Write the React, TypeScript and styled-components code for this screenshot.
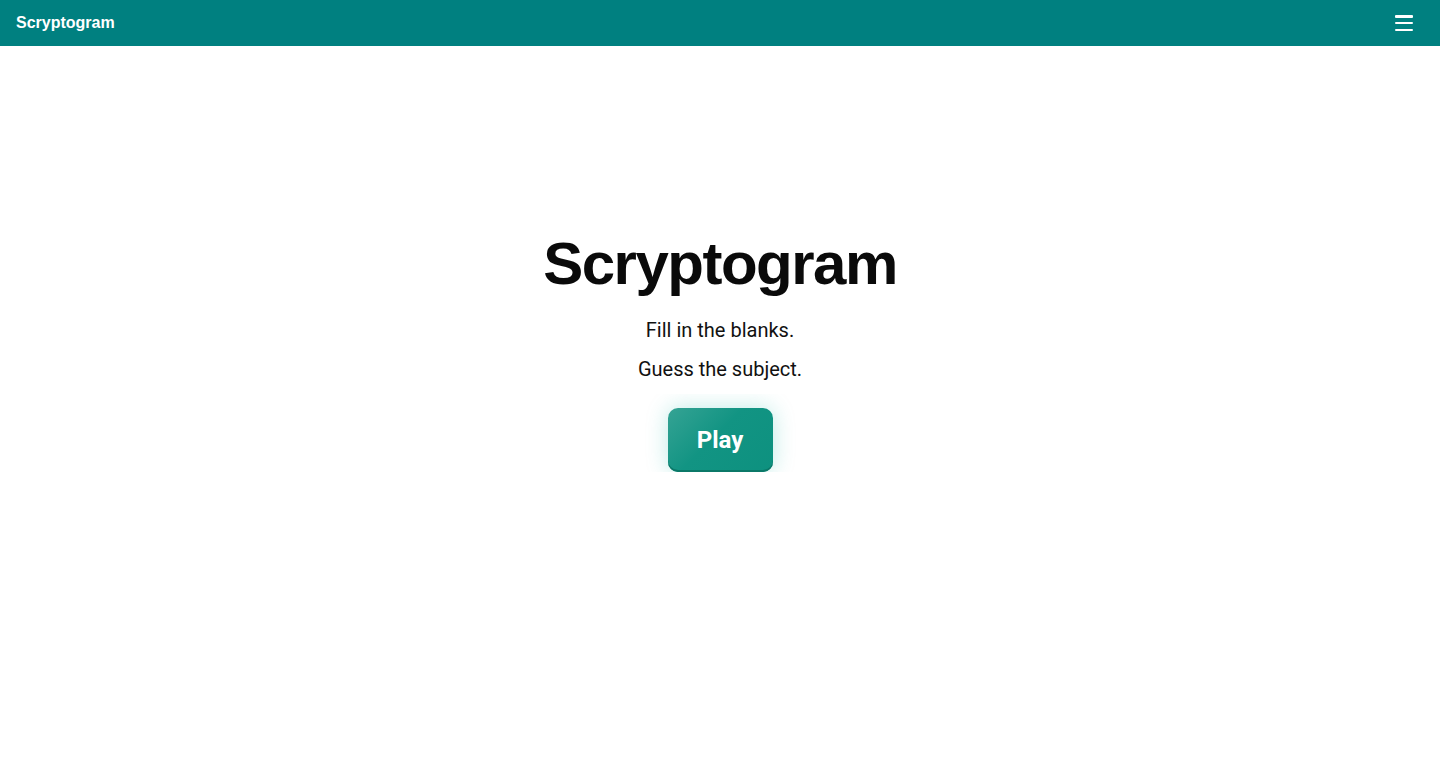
import styled, { createGlobalStyle } from 'styled-components';

const Global = createGlobalStyle`
    body {
        margin: 0;
        background: #ffffff;
        font-family: "Liberation Sans", Arial, sans-serif;
    }
`

const Page = styled.div`
    min-height: 100vh;
    display: flex;
    flex-direction: column;
`

const Header = styled.header`
    height: 46px;
    background-color: #008080;
    display: flex;
    align-items: center;
    justify-content: space-between;
    padding: 0 16px;
`

const Brand = styled.div`
    color: #ffffff;
    font-weight: 700;
    font-size: 16px;
`

const MenuButton = styled.button`
    background: none;
    border: none;
    padding: 0;
    margin-right: 11px;
    width: 18px;
    height: 16px;
    display: flex;
    flex-direction: column;
    justify-content: space-between;
    cursor: pointer;

    span {
        display: block;
        height: 2.5px;
        background: #ffffff;
        border-radius: 1px;
    }
`

const Main = styled.main`
    display: flex;
    flex-direction: column;
    align-items: center;
    padding-top: 182px;
`

const Title = styled.h1`
    margin: 0 0 16px;
    font-size: 60px;
    line-height: 72px;
    font-weight: 700;
    letter-spacing: -1.5px;
    color: #0a0a0a;
`

const Line = styled.p`
    margin: 0 0 11px;
    font-family: Roboto, "Noto Sans", sans-serif;
    font-size: 20px;
    line-height: 28px;
    color: #111111;
`

const ButtonClip = styled.div`
    padding: 14px 30px 0;
    overflow: hidden;
`

const PlayButton = styled.button`
    width: 105px;
    height: 64px;
    border: none;
    border-radius: 10px;
    background: linear-gradient(135deg, #35a394 0%, #129483 45%, #0d917f 100%);
    box-shadow: inset 0 -2px 0 #0b7868, 0 0 22px rgba(20, 184, 166, 0.28);
    color: #ffffff;
    font-family: Roboto, "Noto Sans", sans-serif;
    font-weight: 700;
    font-size: 24px;
    cursor: pointer;
    display: block;
`

const App = () => {
    return (
        <Page>
            <Global />
            <Header>
                <Brand>Scryptogram</Brand>
                <MenuButton aria-label="menu">
                    <span />
                    <span />
                    <span />
                </MenuButton>
            </Header>
            <Main>
                <Title>Scryptogram</Title>
                <Line>Fill in the blanks.</Line>
                <Line>Guess the subject.</Line>
                <ButtonClip>
                    <PlayButton>Play</PlayButton>
                </ButtonClip>
            </Main>
        </Page>
    )
}

export default App
